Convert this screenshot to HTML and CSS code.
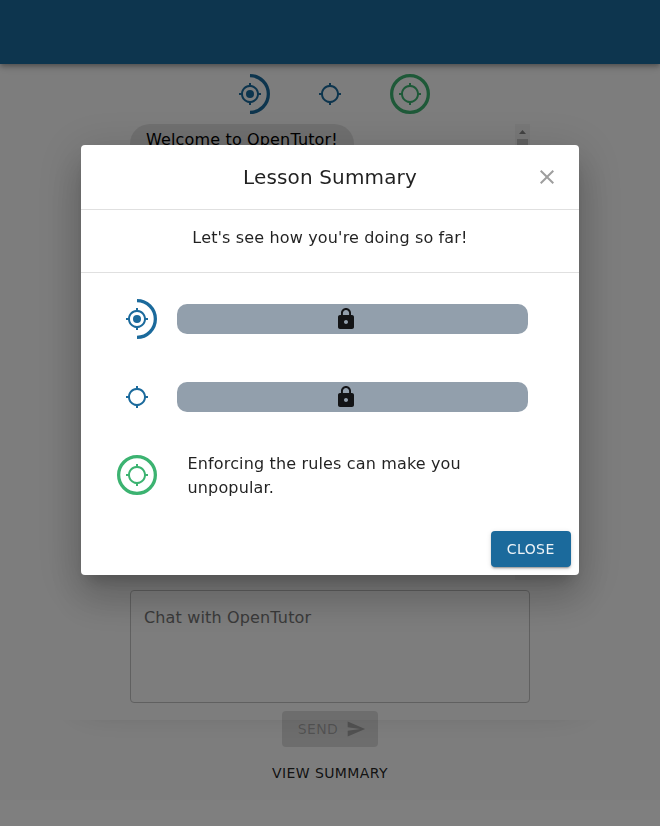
FILE: index.html
```html
<!DOCTYPE html>
<html lang="en">
<head>
<meta charset="utf-8">
<title>OpenTutor</title>
<link rel="stylesheet" href="styles.css">
</head>
<body>
<svg class="defs" aria-hidden="true">
  <symbol id="gps" viewBox="0 0 24 24"><path d="M20.94 11c-.46-4.17-3.77-7.48-7.94-7.94V1h-2v2.06C6.83 3.52 3.52 6.83 3.06 11H1v2h2.06c.46 4.17 3.77 7.48 7.94 7.94V23h2v-2.06c4.17-.46 7.48-3.77 7.94-7.94H23v-2h-2.06zM12 19c-3.87 0-7-3.13-7-7s3.13-7 7-7 7 3.13 7 7-3.13 7-7 7z"/></symbol>
  <symbol id="half" viewBox="22 22 44 44"><path d="M44 23.8a20.2 20.2 0 0 1 0 40.4" fill="none" stroke="currentColor" stroke-width="3.6"/></symbol>
  <symbol id="ring" viewBox="22 22 44 44"><circle cx="44" cy="44" r="20.2" fill="none" stroke="currentColor" stroke-width="3.6"/></symbol>
  <symbol id="lock" viewBox="0 0 24 24"><path d="M18 8h-1V6c0-2.76-2.24-5-5-5S7 3.24 7 6v2H6c-1.1 0-2 .9-2 2v10c0 1.1.9 2 2 2h12c1.1 0 2-.9 2-2V10c0-1.1-.9-2-2-2zm-6 9c-1.1 0-2-.9-2-2s.9-2 2-2 2 .9 2 2-.9 2-2 2zm3.1-9H8.9V6c0-1.71 1.39-3.1 3.1-3.1s3.1 1.39 3.1 3.1v2z"/></symbol>
</svg>

<div class="page">
  <header class="appbar"></header>
  <main class="content">
    <div class="targets">
      <div class="target"><svg class="progress"><use href="#half"/></svg><svg class="glyph" viewBox="0 0 24 24"><use href="#gps"/><circle cx="12" cy="12" r="4"/></svg></div>
      <div class="target"><svg class="glyph"><use href="#gps"/></svg></div>
      <div class="target done"><svg class="progress"><use href="#ring"/></svg><svg class="glyph"><use href="#gps"/></svg></div>
    </div>
    <div class="thread">
      <div class="bubble">Welcome to OpenTutor!</div>
      <div class="scrollbar"><svg class="arrow" viewBox="0 0 15 15"><path d="M4 10l3.5-4 3.5 4z"/></svg><div class="thumb"></div></div>
    </div>
    <div class="field">Chat with OpenTutor</div>
    <div class="actions">
      <div class="send">SEND<svg class="send-icon" viewBox="0 0 24 24"><path d="M2.01 21L23 12 2.01 3 2 10l15 2-15 2z"/></svg></div>
      <div class="view">VIEW SUMMARY</div>
    </div>
  </main>
</div>

<div class="backdrop"></div>
<div class="shade"><div class="shade-box"></div></div>
<div class="modal">
  <section class="dialog" role="dialog">
    <div class="title"><h2>Lesson Summary</h2><svg class="close-icon" viewBox="0 0 24 24"><path d="M19 6.41L17.59 5 12 10.59 6.41 5 5 6.41 10.59 12 5 17.59 6.41 19 12 13.41 17.59 19 19 17.59 13.41 12z"/></svg></div>
    <div class="intro">Let's see how you're doing so far!</div>
    <div class="list">
      <div class="row">
        <div class="target"><svg class="progress"><use href="#half"/></svg><svg class="glyph" viewBox="0 0 24 24"><use href="#gps"/><circle cx="12" cy="12" r="4"/></svg></div>
        <div class="bar"><svg class="lock"><use href="#lock"/></svg></div>
      </div>
      <div class="row">
        <div class="target"><svg class="glyph"><use href="#gps"/></svg></div>
        <div class="bar"><svg class="lock"><use href="#lock"/></svg></div>
      </div>
      <div class="row">
        <div class="target done"><svg class="progress"><use href="#ring"/></svg><svg class="glyph"><use href="#gps"/></svg></div>
        <p class="answer">Enforcing the rules can make you unpopular.</p>
      </div>
    </div>
    <div class="footer"><button class="close">CLOSE</button></div>
  </section>
</div>
</body>
</html>
```
FILE: styles.css
```css
* { box-sizing: border-box; }
body {
  margin: 0;
  height: 826px;
  overflow: hidden;
  background: #fff;
  color: rgba(0, 0, 0, .87);
  font: 16px/24px "DejaVu Sans", sans-serif;
  letter-spacing: .00938em;
}
.defs { display: none; }
svg { display: block; fill: currentColor; }

.page { height: 800px; background: #fafafa; }
.appbar {
  position: relative;
  height: 64px;
  background: #1b6a9c;
  box-shadow: 0 2px 4px -1px rgba(0, 0, 0, .2), 0 4px 5px rgba(0, 0, 0, .14), 0 1px 10px rgba(0, 0, 0, .12);
}
.content { width: 400px; margin: 0 auto; padding-top: 10px; }
.targets { display: flex; justify-content: center; gap: 40px; }
.target { display: grid; place-items: center; flex: none; width: 40px; height: 40px; color: #1b6a9c; }
.target > svg { grid-area: 1 / 1; }
.target.done { color: #3cb371; }
.progress { width: 40px; height: 40px; }
.glyph { width: 24px; height: 24px; }

.thread { display: flex; justify-content: space-between; height: 456px; margin-top: 10px; }
.bubble { height: 40px; padding: 4px 16px; border-radius: 20px; background: #e0e0e0; color: #000; }
.scrollbar { width: 15px; background: #f1f1f1; color: #858585; }
.arrow { width: 15px; height: 15px; }
.thumb { width: 11px; height: 200px; margin: 0 auto; background: #c1c1c1; }

.field {
  height: 113px;
  margin-top: 10px;
  padding: 15px 13px;
  border: 1px solid #c1c1c1;
  border-radius: 4px;
  color: #757575;
}
.actions { display: flex; flex-direction: column; align-items: center; gap: 8px; padding-top: 8px; font-size: 14px; letter-spacing: .02857em; }
.send { display: flex; align-items: center; height: 36px; padding: 0 12px 0 16px; border-radius: 4px; background: rgba(0, 0, 0, .12); color: rgba(0, 0, 0, .26); }
.send-icon { width: 20px; height: 20px; margin-left: 8px; }
.view { display: flex; align-items: center; height: 36px; }

.backdrop { position: fixed; inset: 0; background: rgba(0, 0, 0, .5); }
/* Dialog shadow over the strip below the 720px fold */
.shade { position: fixed; top: 720px; left: 0; right: 0; bottom: 0; overflow: hidden; }
.shade-box { width: 498px; height: 430px; margin: -469px auto 0; }
.dialog, .shade-box {
  border-radius: 4px;
  box-shadow: 0 11px 15px -7px rgba(0, 0, 0, .2), 0 24px 38px 3px rgba(0, 0, 0, .14), 0 9px 46px 8px rgba(0, 0, 0, .12);
}
.modal { position: fixed; top: 0; left: 0; right: 0; height: 720px; display: flex; align-items: center; justify-content: center; overflow: hidden; }
.dialog { display: flex; flex-direction: column; width: 498px; height: 430px; background: #fff; }
.title { display: grid; grid-template-columns: 1fr 24px; align-items: center; height: 64px; padding-right: 20px; }
.title h2 { margin: 0; padding-left: 44px; text-align: center; font-size: 20px; font-weight: 400; line-height: 32px; letter-spacing: .0075em; }
.close-icon { width: 24px; height: 24px; color: #9e9e9e; }
.intro { height: 64px; padding-top: 16px; border: solid rgba(0, 0, 0, .12); border-width: 1px 0; text-align: center; }
.list { display: flex; flex-direction: column; gap: 30px; padding: 22px 36px 0; }
.row { display: flex; align-items: center; height: 48px; }
.bar { display: flex; justify-content: center; align-items: center; width: 351px; height: 30px; margin-left: 20px; padding-right: 13px; border-radius: 10px; background: #929fac; color: #131416; }
.lock { width: 24px; height: 24px; }
.answer { width: 330px; margin: 0 0 0 30.5px; padding-top: 2px; }
.footer { margin-top: auto; padding: 8px; text-align: right; }
.close {
  display: block;
  width: 80px;
  height: 36px;
  margin-left: auto;
  padding: 0 .5px 0 0;
  border: 0;
  border-radius: 4px;
  background: #1b6a9c;
  color: rgba(255, 255, 255, .92);
  font: 14px/24px "DejaVu Sans", sans-serif;
  letter-spacing: .02857em;
  box-shadow: 0 3px 1px -2px rgba(0, 0, 0, .2), 0 2px 2px rgba(0, 0, 0, .14), 0 1px 5px rgba(0, 0, 0, .12);
}
```
